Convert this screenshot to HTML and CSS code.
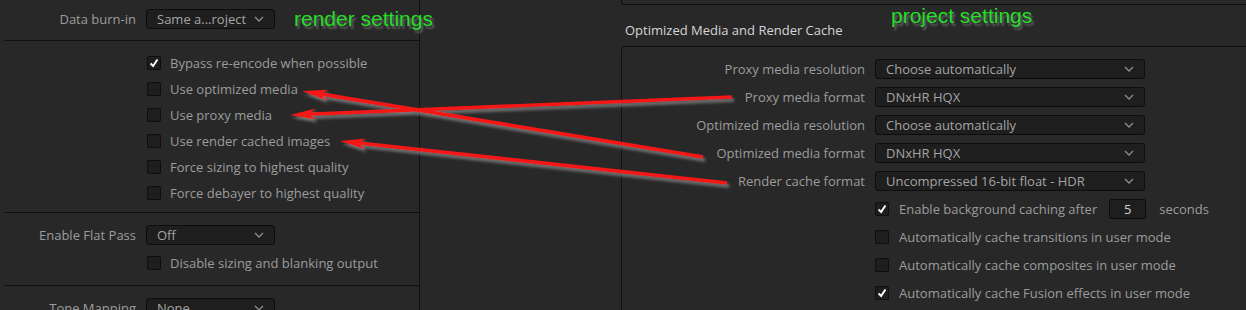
FILE: index.html
```html
<!DOCTYPE html>
<html lang="en">
<head>
    <meta charset="UTF-8">
    <title>Render settings vs project settings</title>
    <link rel="stylesheet" href="styles.css">
</head>
<body>
    <div class="screen">
        <section class="render-panel">
            <div class="group group-burn">
                <div class="field">
                    <label>Data burn-in</label>
                    <div class="select">Same a...roject <svg class="chevron" viewBox="0 0 10 6"><polyline points="1,1 5,5 9,1"/></svg></div>
                </div>
            </div>

            <div class="group group-flags">
                <div class="check"><span class="box on"><svg viewBox="0 0 14 14"><polyline points="3,7.5 6,10.5 11,3"/></svg></span>Bypass re-encode when possible</div>
                <div class="check"><span class="box"></span>Use optimized media</div>
                <div class="check"><span class="box"></span>Use proxy media</div>
                <div class="check"><span class="box"></span>Use render cached images</div>
                <div class="check"><span class="box"></span>Force sizing to highest quality</div>
                <div class="check"><span class="box"></span>Force debayer to highest quality</div>
            </div>

            <div class="group group-flat">
                <div class="field">
                    <label>Enable Flat Pass</label>
                    <div class="select">Off <svg class="chevron" viewBox="0 0 10 6"><polyline points="1,1 5,5 9,1"/></svg></div>
                </div>
                <div class="check"><span class="box"></span>Disable sizing and blanking output</div>
            </div>

            <div class="group group-tone">
                <div class="field">
                    <label>Tone Mapping</label>
                    <div class="select">None <svg class="chevron" viewBox="0 0 10 6"><polyline points="1,1 5,5 9,1"/></svg></div>
                </div>
            </div>
        </section>

        <div class="gutter"></div>

        <section class="project-panel">
            <div class="group-end"></div>
            <h3 class="group-title">Optimized Media and Render Cache</h3>
            <div class="project-box">
                <div class="field">
                    <label>Proxy media resolution</label>
                    <div class="select">Choose automatically <svg class="chevron" viewBox="0 0 10 6"><polyline points="1,1 5,5 9,1"/></svg></div>
                </div>
                <div class="field">
                    <label>Proxy media format</label>
                    <div class="select">DNxHR HQX <svg class="chevron" viewBox="0 0 10 6"><polyline points="1,1 5,5 9,1"/></svg></div>
                </div>
                <div class="field">
                    <label>Optimized media resolution</label>
                    <div class="select">Choose automatically <svg class="chevron" viewBox="0 0 10 6"><polyline points="1,1 5,5 9,1"/></svg></div>
                </div>
                <div class="field">
                    <label>Optimized media format</label>
                    <div class="select">DNxHR HQX <svg class="chevron" viewBox="0 0 10 6"><polyline points="1,1 5,5 9,1"/></svg></div>
                </div>
                <div class="field">
                    <label>Render cache format</label>
                    <div class="select">Uncompressed 16-bit float - HDR <svg class="chevron" viewBox="0 0 10 6"><polyline points="1,1 5,5 9,1"/></svg></div>
                </div>
                <div class="check"><span class="box on"><svg viewBox="0 0 14 14"><polyline points="3,7.5 6,10.5 11,3"/></svg></span>Enable background caching after<span class="num">5</span><span class="unit">seconds</span></div>
                <div class="check"><span class="box"></span>Automatically cache transitions in user mode</div>
                <div class="check"><span class="box"></span>Automatically cache composites in user mode</div>
                <div class="check"><span class="box on"><svg viewBox="0 0 14 14"><polyline points="3,7.5 6,10.5 11,3"/></svg></span>Automatically cache Fusion effects in user mode</div>
            </div>
        </section>

        <!-- annotations drawn over the screenshot -->
        <span class="note note-render">render settings</span>
        <span class="note note-project">project settings</span>

        <svg class="arrows" viewBox="0 0 1246 310">
            <defs>
                <marker id="head" viewBox="0 0 26 11" refX="14" refY="5.5" markerWidth="26" markerHeight="11" markerUnits="userSpaceOnUse" orient="auto">
                    <path d="M0 0 L26 5.5 L0 11 L7 5.5 Z"/>
                </marker>
                <filter id="shade" filterUnits="userSpaceOnUse" x="0" y="0" width="1246" height="310">
                    <feDropShadow dx="2" dy="3" stdDeviation="1.6" flood-color="#7a7a7a" flood-opacity="0.95"/>
                </filter>
            </defs>
            <g filter="url(#shade)">
                <line x1="703" y1="157" x2="313.8" y2="92.9" marker-end="url(#head)"/>
                <line x1="732" y1="97" x2="302" y2="114.5" marker-end="url(#head)"/>
                <line x1="727" y1="183" x2="351.9" y2="142.3" marker-end="url(#head)"/>
            </g>
        </svg>
    </div>
</body>
</html>
```

FILE: styles.css
```css
* {
    margin: 0;
    padding: 0;
    box-sizing: border-box;
}

body {
    background: #282828;
    font-family: 'Open Sans', 'DejaVu Sans', sans-serif;
    font-size: 13px;
    color: #9c9c9c;
}

.screen {
    position: relative;
    display: flex;
    width: 1246px;
    height: 310px;
    overflow: hidden;
    background: #282828;
}

/* left: render settings */
.render-panel {
    flex: 0 0 420px;
    border-right: 1px solid #111;
}

.group {
    margin-left: 4px;
    border-bottom: 1px solid #111;
}

.group-burn {
    padding: 9px 0 11px;
}

.group-flags {
    padding: 9px 0 6px;
}

.group-flat {
    padding: 12px 0 9px;
}

.group-flat .check {
    margin-top: 5px;
}

.group-tone {
    padding-top: 12px;
    border-bottom: none;
}

.field {
    display: grid;
    grid-template-columns: 132px 129px;
    column-gap: 10px;
    align-items: center;
    height: 20px;
}

.field label {
    text-align: right;
    white-space: nowrap;
}

.select {
    display: flex;
    align-items: center;
    justify-content: space-between;
    height: 20px;
    padding: 0 10px 0 10px;
    background: #1e1e1e;
    border: 1px solid #0d0d0d;
    border-radius: 3px;
    color: #a4a4a4;
    white-space: nowrap;
}

.chevron {
    width: 10px;
    height: 6px;
    fill: none;
    stroke: #8e8e8e;
    stroke-width: 1.3;
}

.check {
    display: flex;
    align-items: center;
    height: 26px;
    padding-left: 143px;
    white-space: nowrap;
}

.box {
    flex: 0 0 14px;
    width: 14px;
    height: 14px;
    margin-right: 9px;
    background: #1e1e1e;
    border: 1px solid #0e0e0e;
    border-radius: 2px;
}

.box svg {
    display: block;
    width: 12px;
    height: 12px;
    fill: none;
    stroke: #fff;
    stroke-width: 2.3;
}

.gutter {
    flex: 0 0 201px;
}

/* right: project settings */
.project-panel {
    flex: 0 0 700px;
}

.group-end {
    height: 5px;
    border-left: 1px solid #111;
    border-bottom: 1px solid #111;
    border-bottom-left-radius: 3px;
}

.group-title {
    padding: 16px 0 7px 4px;
    font-size: 13px;
    font-weight: normal;
    line-height: 18px;
    color: #d6d6d6;
}

.project-box {
    display: flex;
    flex-direction: column;
    gap: 8px;
    height: 300px;
    padding-top: 12px;
    border-top: 1px solid #111;
    border-left: 1px solid #111;
    border-top-left-radius: 4px;
}

.project-box .field {
    grid-template-columns: 243px 270px;
}

.project-box .select {
    padding-left: 10px;
}

.project-box .check {
    height: 20px;
    padding-left: 253px;
}

.project-box .box {
    margin-right: 10px;
}

.num {
    width: 37px;
    height: 20px;
    margin-left: 12px;
    background: #1e1e1e;
    border: 1px solid #0d0d0d;
    border-radius: 2px;
    color: #d0d0d0;
    text-align: center;
    line-height: 18px;
}

.unit {
    margin-left: 13px;
}

/* annotations */
.note {
    position: absolute;
    font-family: 'Liberation Sans', Arial, sans-serif;
    font-size: 21px;
    line-height: 21px;
    color: #26de26;
    text-shadow: 2px 3px 2px #606060;
    white-space: nowrap;
}

.note-render {
    left: 294px;
    top: 8px;
}

.note-project {
    left: 891px;
    top: 5px;
}

.arrows {
    position: absolute;
    top: 0;
    left: 0;
    width: 1246px;
    height: 310px;
    pointer-events: none;
}

.arrows line {
    stroke: #f51414;
    stroke-width: 3.6;
}

.arrows marker path {
    fill: #f51414;
}
```
